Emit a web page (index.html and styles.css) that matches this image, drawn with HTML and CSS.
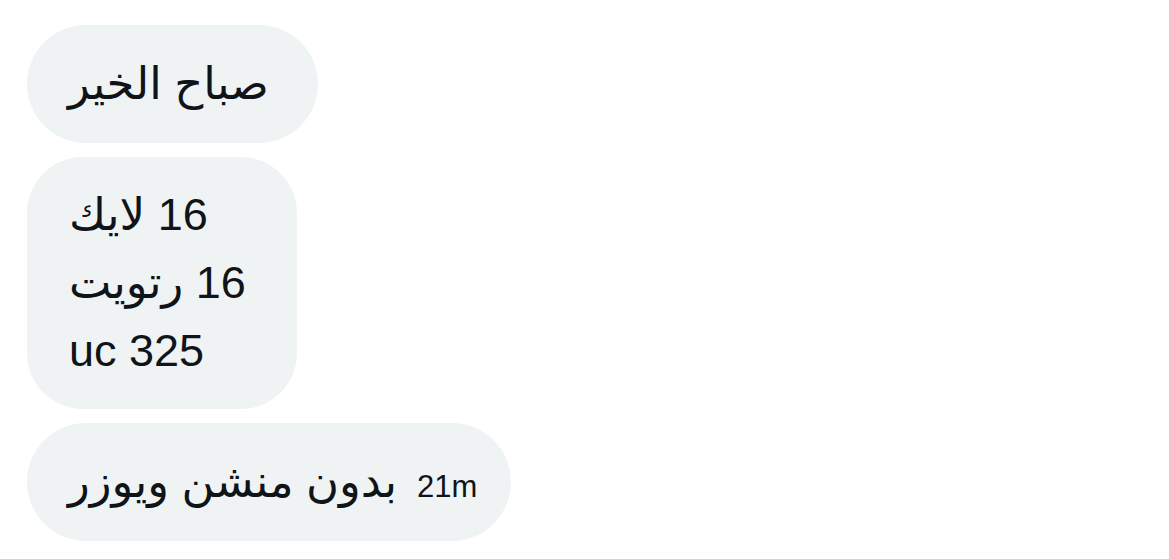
FILE: index.html
```html
<!DOCTYPE html>
<html lang="ar">
<head>
<meta charset="utf-8">
<link rel="stylesheet" href="styles.css">
</head>
<body>
<div class="thread">
  <div class="bubble bubble-greeting">
    <div class="line" dir="rtl">صباح الخير</div>
  </div>
  <div class="bubble bubble-multi">
    <div class="line" dir="rtl">16 لايك</div>
    <div class="line" dir="rtl">16 رتويت</div>
    <div class="line" dir="ltr">uc 325</div>
  </div>
  <div class="bubble bubble-time">
    <div class="line" dir="rtl">بدون منشن ويوزر</div>
    <span class="time">21m</span>
  </div>
</div>
</body>
</html>
```
FILE: styles.css
```css
html, body {
  margin: 0;
  padding: 0;
  background: #ffffff;
}
body {
  font-family: "Liberation Sans", "DejaVu Sans", sans-serif;
  color: #0f1419;
}
.thread {
  display: flex;
  flex-direction: column;
  align-items: flex-start;
  gap: 14px;
  padding: 25px 0 0 27px;
}
.bubble {
  background: #eff3f4;
  border-radius: 59px;
  padding: 25px 44px 25px 41px;
  font-size: 45px;
  line-height: 68px;
}
.bubble-greeting {
  padding-right: 49px;
}
.bubble-multi {
  border-radius: 56px;
  padding: 24px 51px 24px 42px;
}
.line {
  text-align: left;
}
.bubble-time {
  display: flex;
  align-items: baseline;
  gap: 20px;
  padding-right: 34px;
}
.time {
  font-size: 31px;
  line-height: 40px;
}
```
